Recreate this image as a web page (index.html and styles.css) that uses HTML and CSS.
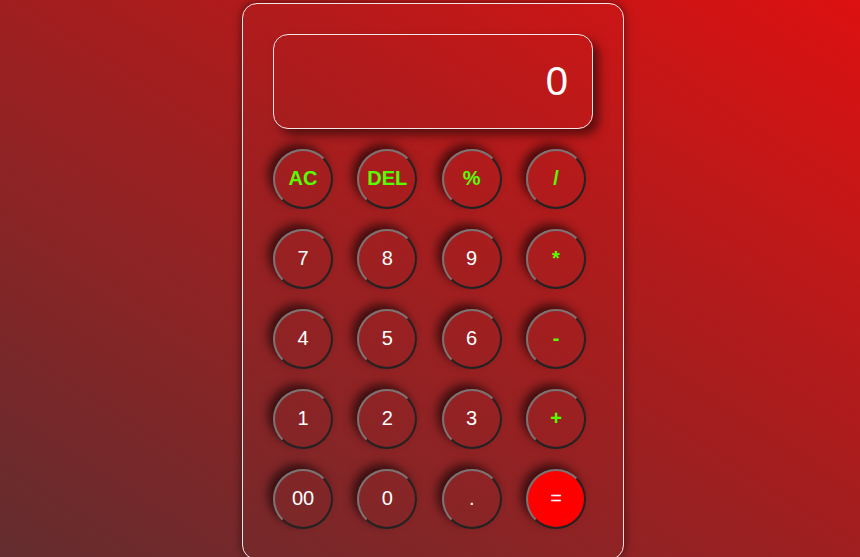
FILE: index.html
```html
<!DOCTYPE html>
<html lang="en">
<head>
<meta charset="utf-8">
<title>Calculator</title>
<link rel="stylesheet" href="styles.css">
</head>
<body>
<div class="calculator">
  <div class="display">0</div>
  <div class="keys">
    <button class="key op">AC</button>
    <button class="key op">DEL</button>
    <button class="key op">%</button>
    <button class="key op">/</button>
    <button class="key">7</button>
    <button class="key">8</button>
    <button class="key">9</button>
    <button class="key op">*</button>
    <button class="key">4</button>
    <button class="key">5</button>
    <button class="key">6</button>
    <button class="key op">-</button>
    <button class="key">1</button>
    <button class="key">2</button>
    <button class="key">3</button>
    <button class="key op">+</button>
    <button class="key">00</button>
    <button class="key">0</button>
    <button class="key">.</button>
    <button class="key equal">=</button>
  </div>
</div>
</body>
</html>
```
FILE: styles.css
```css
html {
  height: 100%;
  overflow: hidden;
}
body {
  margin: 0;
  min-height: 100vh;
  box-sizing: border-box;
  padding: 3px 0 0 6px;
  display: flex;
  justify-content: center;
  align-items: flex-start;
  background: linear-gradient(to top right, #632d2f, #dd1111);
  font-family: "Liberation Sans", Arial, sans-serif;
}
.calculator {
  width: 320px;
  padding: 30px;
  border: 1px solid #f4e4e4;
  border-radius: 15px;
  box-shadow: 0 0 10px rgba(0, 0, 0, 0.55);
}
.display {
  box-sizing: border-box;
  height: 95px;
  border: 1px solid #f4e4e4;
  border-radius: 15px;
  box-shadow: 6px 6px 10px rgba(0, 0, 0, 0.5);
  display: flex;
  align-items: center;
  justify-content: flex-end;
  padding: 0 24px 0 0;
  color: #fff;
  font-size: 40px;
}
.keys {
  margin-top: 20px;
  display: grid;
  grid-template-columns: repeat(4, 60px);
  column-gap: 24.33px;
  row-gap: 20px;
}
.key {
  box-sizing: border-box;
  width: 60px;
  height: 60px;
  border-radius: 50%;
  border: 2px solid;
  border-color: #7a7474 #222 #222 #7a7474;
  background: transparent;
  color: #fff;
  font-family: "Liberation Sans", Arial, sans-serif;
  font-size: 20px;
  padding: 0 0 2px;
  box-shadow: -5px -5px 10px rgba(0, 0, 0, 0.6);
}
.op {
  color: #55ff00;
  font-weight: bold;
}
.equal {
  background: #ff0000;
}
```
